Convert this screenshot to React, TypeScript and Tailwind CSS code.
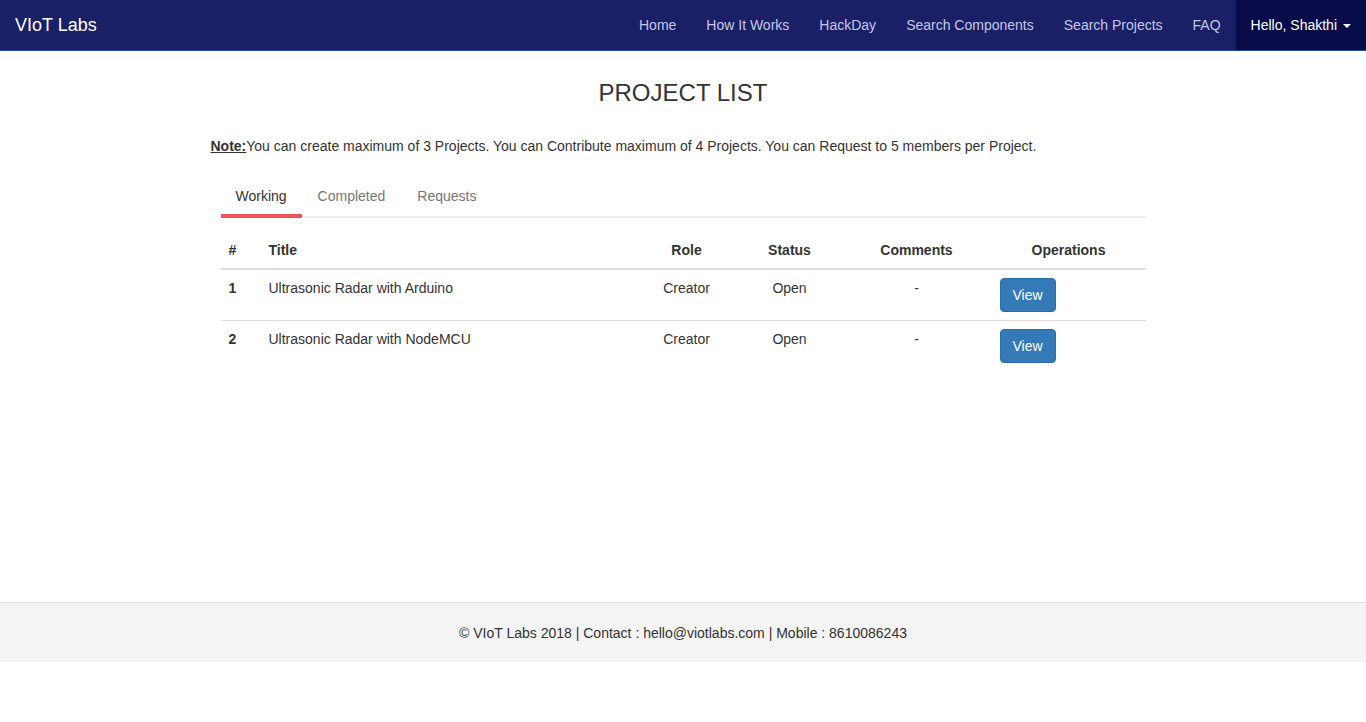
import { useState } from "react";

interface Project {
  id: number;
  title: string;
  role: string;
  status: string;
  comments: string;
}

const projects: Project[] = [
  { id: 1, title: "Ultrasonic Radar with Arduino", role: "Creator", status: "Open", comments: "-" },
  { id: 2, title: "Ultrasonic Radar with NodeMCU", role: "Creator", status: "Open", comments: "-" },
];

const navLinks = ["Home", "How It Works", "HackDay", "Search Components", "Search Projects", "FAQ"];
const tabs = ["Working", "Completed", "Requests"];

export default function App() {
  const [tab, setTab] = useState("Working");

  return (
    <div className="flex min-h-[722px] flex-col bg-white text-[14px] text-[#333] [font-family:'Liberation_Sans',Arial,sans-serif]">
      <nav className="flex h-[51px] items-stretch justify-between border-b border-[#2b4a8c] bg-[#1a1f66]">
        <a className="flex items-center pl-[15px] text-[18px] text-white">VIoT Labs</a>
        <ul className="flex items-stretch">
          {navLinks.map((link) => (
            <li key={link} className="flex items-center px-[15px] text-[#c3c8e6]">
              {link}
            </li>
          ))}
          <li className="flex items-center gap-[6px] bg-[#070b47] pl-[15px] pr-[15px] text-white">
            Hello, Shakthi
            <span className="mt-[2px] border-x-[4px] border-t-[4px] border-x-transparent border-t-white" />
          </li>
        </ul>
      </nav>

      <main className="flex-1 pb-[40px]">
        <div className="mx-auto w-[945px]">
          <h1 className="mt-[28px] text-center text-[24px] leading-[28px] text-[#333]">PROJECT LIST</h1>
          <p className="mt-[29px] leading-[20px]">
            <u className="font-bold">Note:</u>You can create maximum of 3 Projects. You can Contribute maximum of 4
            Projects. You can Request to 5 members per Project.
          </p>

          <div className="mx-[10px] mt-[21px]">
            <div className="flex border-b-[2px] border-[#eee]">
              {tabs.map((t) => (
                <button
                  key={t}
                  type="button"
                  onClick={() => setTab(t)}
                  className={
                    t === tab
                      ? "-mb-[2px] border-b-[4px] border-[#ef545b] px-[15px] pb-[8px] pt-[9px] leading-[20px] text-[#333]"
                      : "-mb-[2px] border-b-[4px] border-transparent px-[16px] pb-[8px] pt-[9px] leading-[20px] text-[#777]"
                  }
                >
                  {t}
                </button>
              ))}
            </div>

            <table className="mt-[14px] w-full border-collapse">
              <thead>
                <tr className="border-b-[2px] border-[#ddd] font-bold">
                  <th className="w-[40px] px-[8px] py-[8px] text-left leading-[20px]">#</th>
                  <th className="px-[8px] py-[8px] text-left leading-[20px]">Title</th>
                  <th className="w-[102px] px-[8px] py-[8px] text-center leading-[20px]">Role</th>
                  <th className="w-[104px] px-[8px] py-[8px] text-center leading-[20px]">Status</th>
                  <th className="w-[150px] px-[8px] py-[8px] text-center leading-[20px]">Comments</th>
                  <th className="w-[154px] px-[8px] py-[8px] text-center leading-[20px]">Operations</th>
                </tr>
              </thead>
              <tbody>
                {projects.map((p) => (
                  <tr key={p.id} className="border-b border-[#ddd] last:border-b-0">
                    <td className="px-[8px] pb-[8px] pt-[8px] align-top font-bold leading-[20px]">{p.id}</td>
                    <td className="px-[8px] pt-[8px] align-top leading-[20px]">{p.title}</td>
                    <td className="px-[8px] pt-[8px] text-center align-top leading-[20px]">{p.role}</td>
                    <td className="px-[8px] pt-[8px] text-center align-top leading-[20px]">{p.status}</td>
                    <td className="px-[8px] pt-[8px] text-center align-top leading-[20px]">{p.comments}</td>
                    <td className="px-[8px] pb-[8px] pt-[8px] align-top">
                      <button
                        type="button"
                        className="rounded-[4px] border border-[#2e6da4] bg-[#337ab7] px-[12px] py-[6px] leading-[20px] text-white"
                      >
                        View
                      </button>
                    </td>
                  </tr>
                ))}
              </tbody>
            </table>
          </div>
        </div>
      </main>

      <footer className="mb-[60px] flex h-[60px] items-center justify-center border-t border-[#e3e3e3] bg-[#f4f4f4] pt-[2px]">
        © VIoT Labs 2018 | Contact : hello@viotlabs.com | Mobile : 8610086243
      </footer>
    </div>
  );
}
